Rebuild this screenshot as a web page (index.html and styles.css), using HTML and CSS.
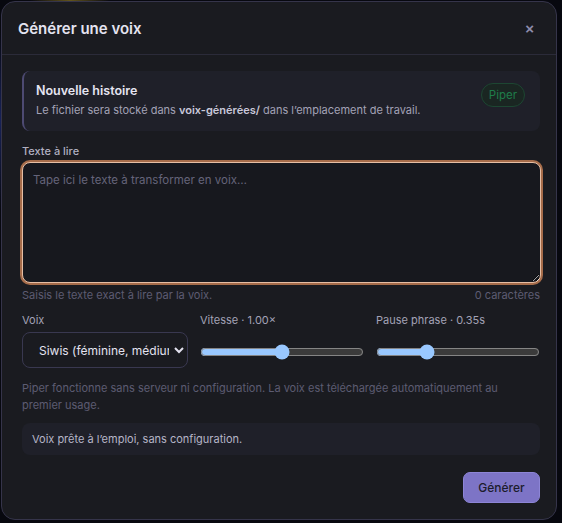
FILE: index.html
```html
<!DOCTYPE html>
<html lang="fr">
<head>
    <meta charset="UTF-8">
    <meta name="viewport" content="width=device-width, initial-scale=1.0">
    <title>Générer une voix</title>
    <link rel="stylesheet" href="styles.css">
</head>
<body>

    <div class="modal">
        <div class="modal-head">
            <h2>Générer une voix</h2>
            <button class="close" aria-label="Fermer">×</button>
        </div>

        <div class="modal-body">
            <div class="info-card">
                <div>
                    <h3>Nouvelle histoire</h3>
                    <p>Le fichier sera stocké dans <b>voix-générées/</b> dans l’emplacement de travail.</p>
                </div>
                <span class="badge">Piper</span>
            </div>

            <label class="field-label" for="text">Texte à lire</label>
            <textarea id="text" placeholder="Tape ici le texte à transformer en voix…" autofocus></textarea>
            <div class="hint-row">
                <span>Saisis le texte exact à lire par la voix.</span>
                <span>0 caractères</span>
            </div>

            <div class="controls">
                <div class="control">
                    <label for="voice">Voix</label>
                    <select id="voice">
                        <option>Siwis (féminine, médium)</option>
                        <option>Tom (masculin, médium)</option>
                    </select>
                </div>
                <div class="control">
                    <label for="speed">Vitesse · 1.00×</label>
                    <input type="range" id="speed" min="0.5" max="1.5" step="0.05" value="1">
                </div>
                <div class="control">
                    <label for="pause">Pause phrase · 0.35s</label>
                    <input type="range" id="pause" min="0" max="1.2" step="0.05" value="0.35">
                </div>
            </div>

            <p class="note">Piper fonctionne sans serveur ni configuration. La voix est téléchargée automatiquement au premier usage.</p>

            <div class="status">Voix prête à l’emploi, sans configuration.</div>

            <div class="actions">
                <button class="primary">Générer</button>
            </div>
        </div>
    </div>

</body>
</html>
```

FILE: styles.css
```css
html, body {
    height: 100%;
}
body {
    margin: 0;
    font-family: Inter, "Noto Sans", sans-serif;
    background:
        radial-gradient(circle at 70px 0px, rgba(190, 160, 40, 0.5), transparent 40px),
        radial-gradient(circle at 0px 120px, rgba(40, 60, 160, 0.5), transparent 90px),
        #07080f;
    overflow: hidden;
}
.modal {
    box-sizing: border-box;
    width: 556px;
    height: 519px;
    margin: 1px 0 0 1px;
    background: #1a1b20;
    border: 1px solid #35344a;
    border-radius: 14px;
    color: #e2e1ee;
}
.modal-head {
    display: flex;
    align-items: center;
    justify-content: space-between;
    height: 52px;
    padding: 0 22px 0 16px;
    border-bottom: 1px solid #2b2b39;
}
.modal-head h2 {
    margin: 0;
    font-size: 15px;
    font-weight: 600;
    color: #e4e3f0;
}
.close {
    background: none;
    border: none;
    color: #8e8cab;
    font-size: 15px;
    font-weight: 600;
    padding: 0;
    cursor: pointer;
}
.modal-body {
    padding: 16px 16px 0 20px;
}
.info-card {
    display: flex;
    justify-content: space-between;
    align-items: flex-start;
    height: 60px;
    box-sizing: border-box;
    padding: 12px 15px 0 12px;
    background: #1f2029;
    border-left: 2px solid #4d4a72;
    border-radius: 8px;
}
.info-card h3 {
    margin: 0 0 5px;
    font-size: 12.5px;
    font-weight: 600;
    color: #e6e5f2;
}
.info-card p {
    margin: 0;
    font-size: 11px;
    color: #a3a2b6;
}
.info-card b {
    color: #c9c8da;
    font-weight: 600;
}
.badge {
    padding: 4px 7px;
    font-size: 11.5px;
    color: #1f7d4a;
    background: #1a2622;
    border: 1px solid #1d4632;
    border-radius: 12px;
}
.field-label {
    display: block;
    margin: 13px 0 4px 0;
    font-size: 11px;
    font-weight: 500;
    color: #b1b0c2;
}
textarea {
    display: block;
    box-sizing: border-box;
    width: 519px;
    height: 121px;
    padding: 10px 10px;
    font-family: inherit;
    font-size: 11.5px;
    color: #e2e1ee;
    background: #17181e;
    border: 1px solid #e6bea4;
    border-radius: 8px;
    box-shadow: 0 0 0 2px #a66c4a;
    outline: none;
    color-scheme: dark;
    resize: vertical;
}
textarea::placeholder {
    color: #65647a;
}
.hint-row {
    display: flex;
    justify-content: space-between;
    margin-top: 5px;
    font-size: 11px;
    color: #5d5c72;
}
.controls {
    display: grid;
    grid-template-columns: 166px 1fr 1fr;
    gap: 12px;
    margin-top: 11px;
}
.control label {
    display: block;
    margin-bottom: 5px;
    font-size: 11px;
    color: #a3a2b6;
}
select {
    box-sizing: border-box;
    width: 100%;
    height: 36px;
    padding: 0 2px 0 12px;
    font-family: inherit;
    font-size: 12px;
    color: #e4e3f0;
    background: #1a1b20;
    border: 1px solid #393850;
    border-radius: 8px;
    color-scheme: dark;
}
input[type="range"] {
    width: 100%;
    margin: 12px 0 0;
    color-scheme: dark;
}
.note {
    margin: 12px 0 0;
    padding-right: 30px;
    font-size: 11px;
    line-height: 17px;
    color: #5d5c72;
}
.status {
    box-sizing: border-box;
    height: 32px;
    margin-top: 9px;
    padding: 0 10px;
    display: flex;
    align-items: center;
    font-size: 11px;
    color: #b6b5c7;
    background: #1f2029;
    border-radius: 8px;
}
.actions {
    display: flex;
    justify-content: flex-end;
    margin-top: 17px;
}
.primary {
    width: 77px;
    height: 31px;
    font-family: inherit;
    font-size: 12px;
    font-weight: 500;
    color: #1c1c2c;
    background: #7d74c6;
    border: 1px solid #8d85d6;
    border-radius: 7px;
    cursor: pointer;
}
```
